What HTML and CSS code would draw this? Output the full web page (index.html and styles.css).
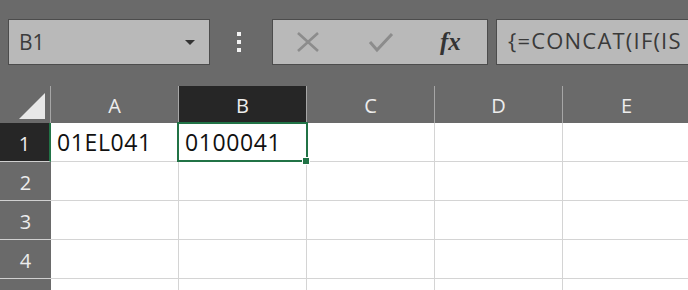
FILE: index.html
```html
<!DOCTYPE html>
<html>
<head>
    <title>Sheet</title>
    <link rel="stylesheet" href="styles.css">
</head>
<body>
    <div class="toolbar">
        <div class="name-box">
            <span>B1</span>
            <span class="arrow"></span>
        </div>
        <div class="dots">
            <span></span><span></span><span></span>
        </div>
        <div class="fx-box">
            <svg class="icon" width="24" height="22" viewBox="0 0 24 22">
                <path d="M2 2 L22 20 M22 2 L2 20" stroke="#8c8c8c" stroke-width="2.6" fill="none"/>
            </svg>
            <svg class="icon" width="26" height="22" viewBox="0 0 26 22">
                <path d="M2 11 L9 19 L24 3" stroke="#8c8c8c" stroke-width="3" fill="none"/>
            </svg>
            <span class="fx">fx</span>
        </div>
        <div class="formula">{=CONCAT(IF(IS</div>
    </div>

    <div class="sheet">
        <div class="corner"><span class="tri"></span></div>
        <div class="col-head">A</div>
        <div class="col-head selected">B</div>
        <div class="col-head">C</div>
        <div class="col-head">D</div>
        <div class="col-head">E</div>

        <div class="row-head selected">1</div>
        <div class="cell">01EL041</div>
        <div class="cell active">0100041<span class="handle"></span></div>
        <div class="cell"></div>
        <div class="cell"></div>
        <div class="cell"></div>

        <div class="row-head">2</div>
        <div class="cell"></div><div class="cell"></div><div class="cell"></div><div class="cell"></div><div class="cell"></div>

        <div class="row-head">3</div>
        <div class="cell"></div><div class="cell"></div><div class="cell"></div><div class="cell"></div><div class="cell"></div>

        <div class="row-head">4</div>
        <div class="cell"></div><div class="cell"></div><div class="cell"></div><div class="cell"></div><div class="cell"></div>

        <div class="row-head"></div>
        <div class="cell"></div><div class="cell"></div><div class="cell"></div><div class="cell"></div><div class="cell"></div>
    </div>
</body>
</html>
```

FILE: styles.css
```css
body {
    font-family: "Open Sans", "Noto Sans", sans-serif;
    background-color: #6a6a6a;
    margin: 0;
    width: 688px;
    height: 290px;
    overflow: hidden;
}

.toolbar {
    display: flex;
    align-items: center;
    height: 86px;
    padding-left: 8px;
    white-space: nowrap;
}

.name-box {
    flex: none;
    display: flex;
    align-items: center;
    justify-content: space-between;
    box-sizing: border-box;
    width: 202px;
    height: 46px;
    padding: 0 14px 0 10px;
    background-color: #b9b9b9;
    border: 1px solid #4c4c4c;
    color: #3c3c3c;
    font-size: 21px;
    margin-top: -2px;
}

.arrow {
    width: 0;
    height: 0;
    border-left: 5px solid transparent;
    border-right: 5px solid transparent;
    border-top: 5px solid #333;
}

.dots {
    flex: none;
    display: flex;
    flex-direction: column;
    gap: 4px;
    margin: -2px 0 0 27px;
}

.dots span {
    width: 4px;
    height: 4px;
    background-color: #f2f2f2;
}

.fx-box {
    flex: none;
    display: flex;
    align-items: center;
    box-sizing: border-box;
    width: 216px;
    height: 46px;
    margin: -2px 0 0 31px;
    padding-left: 23px;
    background-color: #b9b9b9;
    border: 1px solid #4c4c4c;
}

.icon {
    display: block;
}

.icon + .icon {
    margin-left: 48px;
}

.fx {
    margin-left: 46px;
    font-family: "Liberation Serif", serif;
    font-style: italic;
    font-weight: bold;
    font-size: 25px;
    color: #333;
}

.formula {
    flex: none;
    box-sizing: border-box;
    width: 200px;
    height: 46px;
    margin: -2px 0 0 8px;
    padding: 5px 0 0 11px;
    background-color: #b9b9b9;
    border: 1px solid #4c4c4c;
    color: #3a3a3a;
    font-size: 22px;
    letter-spacing: 1.2px;
    overflow: hidden;
}

.sheet {
    display: grid;
    grid-template-columns: 51px repeat(5, 128px);
    grid-template-rows: 37px repeat(5, 39px);
    background-color: #fff;
}

.corner {
    display: flex;
    align-items: flex-end;
    justify-content: flex-end;
    padding: 0 5px 4px 0;
    background-color: #6a6a6a;
    border-right: 1px solid #a6a6a6;
}

.tri {
    width: 0;
    height: 0;
    border-left: 26px solid transparent;
    border-bottom: 26px solid #e8e8e8;
}

.col-head {
    display: flex;
    align-items: center;
    justify-content: center;
    box-sizing: border-box;
    background-color: #6a6a6a;
    border-right: 1px solid #a6a6a6;
    color: #ededed;
    font-size: 20px;
    padding-top: 2px;
}

.col-head.selected {
    background-color: #262626;
}

.row-head {
    display: flex;
    align-items: center;
    justify-content: center;
    box-sizing: border-box;
    background-color: #6a6a6a;
    border-bottom: 1px solid #d0d0d0;
    color: #ededed;
    font-size: 20px;
    padding-top: 2px;
}

.row-head.selected {
    background-color: #262626;
    border-right: 2px solid #217346;
}

.cell {
    position: relative;
    box-sizing: border-box;
    border-right: 1px solid #d4d4d4;
    border-bottom: 1px solid #d4d4d4;
    padding: 3px 0 0 6px;
    color: #111;
    font-size: 23px;
    letter-spacing: 0.6px;
}

.cell.active::after {
    content: "";
    position: absolute;
    top: -1px;
    left: -2px;
    right: -2px;
    bottom: -1px;
    border: 2px solid #217346;
}

.handle {
    position: absolute;
    right: -4px;
    bottom: -4px;
    width: 6px;
    height: 6px;
    background-color: #217346;
    border: 1px solid #fff;
    z-index: 1;
}
```
